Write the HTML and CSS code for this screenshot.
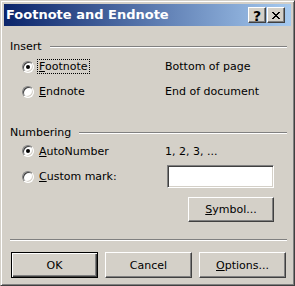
FILE: index.html
```html
<!DOCTYPE html>
<html>
<head>
<meta charset="utf-8">
<link rel="stylesheet" href="styles.css">
</head>
<body>
<div class="window">
  <div class="titlebar">
    <span class="title">Footnote and Endnote</span>
    <div class="caption-btns">
      <span class="cbtn help">?</span>
      <span class="cbtn close"><svg width="8" height="7" viewBox="0 0 8 7" shape-rendering="crispEdges"><path d="M0 0h2v1h-2z M6 0h2v1h-2z M1 1h2v1h-2z M5 1h2v1h-2z M2 2h4v1h-4z M3 3h2v1h-2z M2 4h4v1h-4z M1 5h2v1h-2z M5 5h2v1h-2z M0 6h2v1h-2z M6 6h2v1h-2z" fill="#000"/></svg></span>
    </div>
  </div>
  <div class="content">
    <div class="group-head"><span>Insert</span><div class="etch"></div></div>
    <div class="opt-grid first">
      <div class="radio-row"><span class="radio checked"></span><span class="lbl focus"><u>F</u>ootnote</span></div>
      <span class="desc">Bottom of page</span>
      <div class="radio-row"><span class="radio"></span><span class="lbl"><u>E</u>ndnote</span></div>
      <span class="desc">End of document</span>
    </div>
    <div class="group-head numbering"><span>Numbering</span><div class="etch"></div></div>
    <div class="opt-grid second">
      <div class="radio-row"><span class="radio checked"></span><span class="lbl"><u>A</u>utoNumber</span></div>
      <span class="desc">1, 2, 3, ...</span>
      <div class="radio-row"><span class="radio"></span><span class="lbl"><u>C</u>ustom mark:</span></div>
      <input class="field" type="text">
      <span></span>
      <button class="btn symbol"><span><u>S</u>ymbol...</span></button>
    </div>
    <div class="sep"></div>
    <div class="btn-row">
      <button class="btn default">OK</button>
      <button class="btn">Cancel</button>
      <button class="btn"><span><u>O</u>ptions...</span></button>
    </div>
  </div>
</div>
</body>
</html>
```

FILE: styles.css
```css
html, body {
  margin: 0;
  padding: 0;
  background: #d4d0c8;
}
body {
  font-family: "DejaVu Sans", sans-serif;
  font-size: 11px;
  line-height: 13px;
  color: #000;
}
.window {
  width: 295px;
  height: 286px;
  box-sizing: border-box;
  border: 1px solid;
  border-color: #d4d0c8 #404040 #404040 #d4d0c8;
  box-shadow: inset 1px 1px #fff, inset -1px -1px #808080;
  padding: 3px;
  display: flex;
  flex-direction: column;
  background: #d4d0c8;
}
.titlebar {
  height: 22px;
  flex: none;
  background: linear-gradient(to right, #0a246a, #a6caf0);
  display: flex;
  align-items: center;
  padding: 0 6px 0 2px;
  color: #fff;
  font-weight: bold;
  font-size: 13px;
  line-height: 16px;
}
.title {
  flex: 1;
  white-space: nowrap;
}
.caption-btns {
  display: flex;
  gap: 1px;
}
.cbtn {
  width: 18px;
  height: 16px;
  box-sizing: border-box;
  background: #d4d0c8;
  border: 1px solid;
  border-color: #fff #404040 #404040 #fff;
  box-shadow: inset -1px -1px #808080;
  display: flex;
  align-items: center;
  justify-content: center;
  color: #000;
}
.cbtn.help {
  font-size: 14px;
  font-weight: bold;
  line-height: 14px;
  padding-top: 1px;
}
.content {
  flex: 1;
  padding: 14px 4px 0 6px;
  display: flex;
  flex-direction: column;
}
.group-head {
  display: flex;
  align-items: center;
  height: 13px;
  white-space: nowrap;
}
.group-head.numbering {
  margin-top: 22px;
}
.etch {
  flex: 1;
  margin-left: 8px;
  border-top: 1px solid #808080;
  border-bottom: 1px solid #fff;
}
.opt-grid {
  display: grid;
  grid-template-columns: 155px 1fr;
  align-items: center;
}
.opt-grid.first {
  margin-top: 1px;
  grid-template-rows: 25px 25px;
}
.opt-grid.second {
  grid-template-rows: 24px 27px 32px;
}
.radio-row {
  display: flex;
  align-items: center;
  padding-left: 12px;
  gap: 3px;
  white-space: nowrap;
}
.radio {
  width: 12px;
  height: 12px;
  flex: none;
  box-sizing: border-box;
  border-radius: 50%;
  background: #fff;
  border: 1px solid;
  border-color: #808080 #fff #fff #808080;
  box-shadow: inset 1px 1px #404040, inset -1px -1px #d4d0c8;
  position: relative;
}
.radio.checked::after {
  content: "";
  position: absolute;
  left: 3px;
  top: 3px;
  width: 4px;
  height: 4px;
  border-radius: 50%;
  background: #000;
}
.lbl {
  padding: 0 1px;
  border: 1px dotted transparent;
  line-height: 13px;
}
.lbl.focus {
  border-color: #000;
}
.desc {
  white-space: nowrap;
}
.field {
  width: 107px;
  height: 23px;
  box-sizing: border-box;
  margin: 0 0 0 2px;
  padding: 0;
  border: 1px solid;
  border-color: #808080 #fff #fff #808080;
  box-shadow: inset 1px 1px #404040, inset -1px -1px #d4d0c8;
  background: #fff;
  outline: none;
  font: inherit;
}
.btn {
  width: 87px;
  height: 26px;
  box-sizing: border-box;
  margin: 0;
  padding: 0;
  background: #d4d0c8;
  border: 1px solid;
  border-color: #fff #404040 #404040 #fff;
  box-shadow: inset -1px -1px #808080;
  display: flex;
  align-items: center;
  justify-content: center;
  font: inherit;
  color: #000;
}
.btn.default {
  border-color: #000;
  box-shadow: inset 1px 1px #fff, inset -1px -1px #404040, inset -2px -2px #808080;
}
.btn.symbol {
  width: 86px;
  height: 25px;
  align-self: end;
  justify-self: end;
  margin-right: 13px;
}
.sep {
  margin-top: 17px;
  border-top: 1px solid #808080;
  border-bottom: 1px solid #fff;
}
.btn-row {
  display: flex;
  gap: 7px;
  margin-top: 11px;
  margin-left: 1px;
}
```
